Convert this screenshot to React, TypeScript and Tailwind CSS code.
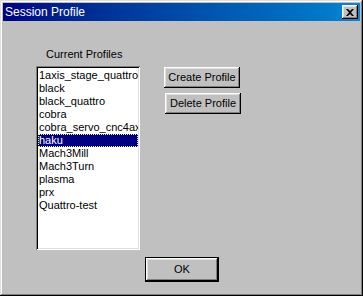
import React from 'react';

const profiles = [
  '1axis_stage_quattro',
  'black',
  'black_quattro',
  'cobra',
  'cobra_servo_cnc4axis',
  'haku',
  'Mach3Mill',
  'Mach3Turn',
  'plasma',
  'prx',
  'Quattro-test',
];

const raised =
  'bg-[#c0c0c0] shadow-[inset_-1px_-1px_#000,inset_1px_1px_#fff,inset_-2px_-2px_#808080,inset_2px_2px_#dfdfdf]';

const Button: React.FC<{ label: string; className?: string }> = ({ label, className }) => (
  <button className={`${raised} flex items-center justify-center text-[11px] text-black ${className ?? ''}`}>
    {label}
  </button>
);

export default function App() {
  const selected = 'haku';

  return (
    <div
      className="w-[363px] h-[296px] bg-[#c0c0c0] flex flex-col p-[3px] shadow-[inset_-1px_-1px_#000,inset_1px_1px_#dfdfdf,inset_-2px_-2px_#808080,inset_2px_2px_#fff]"
      style={{ fontFamily: '"Liberation Sans", Arial, sans-serif' }}
    >
      {/* title bar */}
      <div className="h-[18px] bg-gradient-to-r from-[#000080] to-[#1084d0] flex items-center justify-between pl-[2px] pr-[2px]">
        <span className="text-white text-[12px] leading-none">Session Profile</span>
        <div className={`${raised} w-[16px] h-[14px] flex items-center justify-center`}>
          <svg width="8" height="7" viewBox="0 0 8 7">
            <path d="M0 0h2l2 2 2-2h2L5 3.5 8 7H6L4 5 2 7H0l3-3.5z" fill="#000" />
          </svg>
        </div>
      </div>

      {/* body */}
      <div className="flex pl-[33px] pt-[27px]">
        <div className="flex flex-col">
          <span className="ml-[10px] text-[11px] leading-[13px] text-black">Current Profiles</span>
          <div className="mt-[5px] w-[104px] h-[184px] bg-white p-[2px] shadow-[inset_1px_1px_#808080,inset_-1px_-1px_#fff,inset_2px_2px_#000,inset_-2px_-2px_#dfdfdf] overflow-hidden">
            <div className="pt-[1px]">
              {profiles.map((p) => (
                <div
                  key={p}
                  className={`h-[13px] leading-[13px] text-[11px] whitespace-nowrap overflow-hidden pl-[1px] ${
                    p === selected ? 'bg-[#000080] text-white outline-1 outline-dotted outline-[#ffff80] -outline-offset-1' : 'text-black'
                  }`}
                >
                  {p}
                </div>
              ))}
            </div>
          </div>
        </div>
        <div className="flex flex-col ml-[24px] mt-[19px] gap-[5px]">
          <Button label="Create Profile" className="w-[76px] h-[21px]" />
          <Button label="Delete Profile" className="w-[76px] h-[21px] ml-[1px]" />
        </div>
      </div>

      <div className="flex justify-center mt-[7px] pl-[1px]">
        <div className="border border-black">
          <Button label="OK" className="w-[72px] h-[23px]" />
        </div>
      </div>
    </div>
  );
}
